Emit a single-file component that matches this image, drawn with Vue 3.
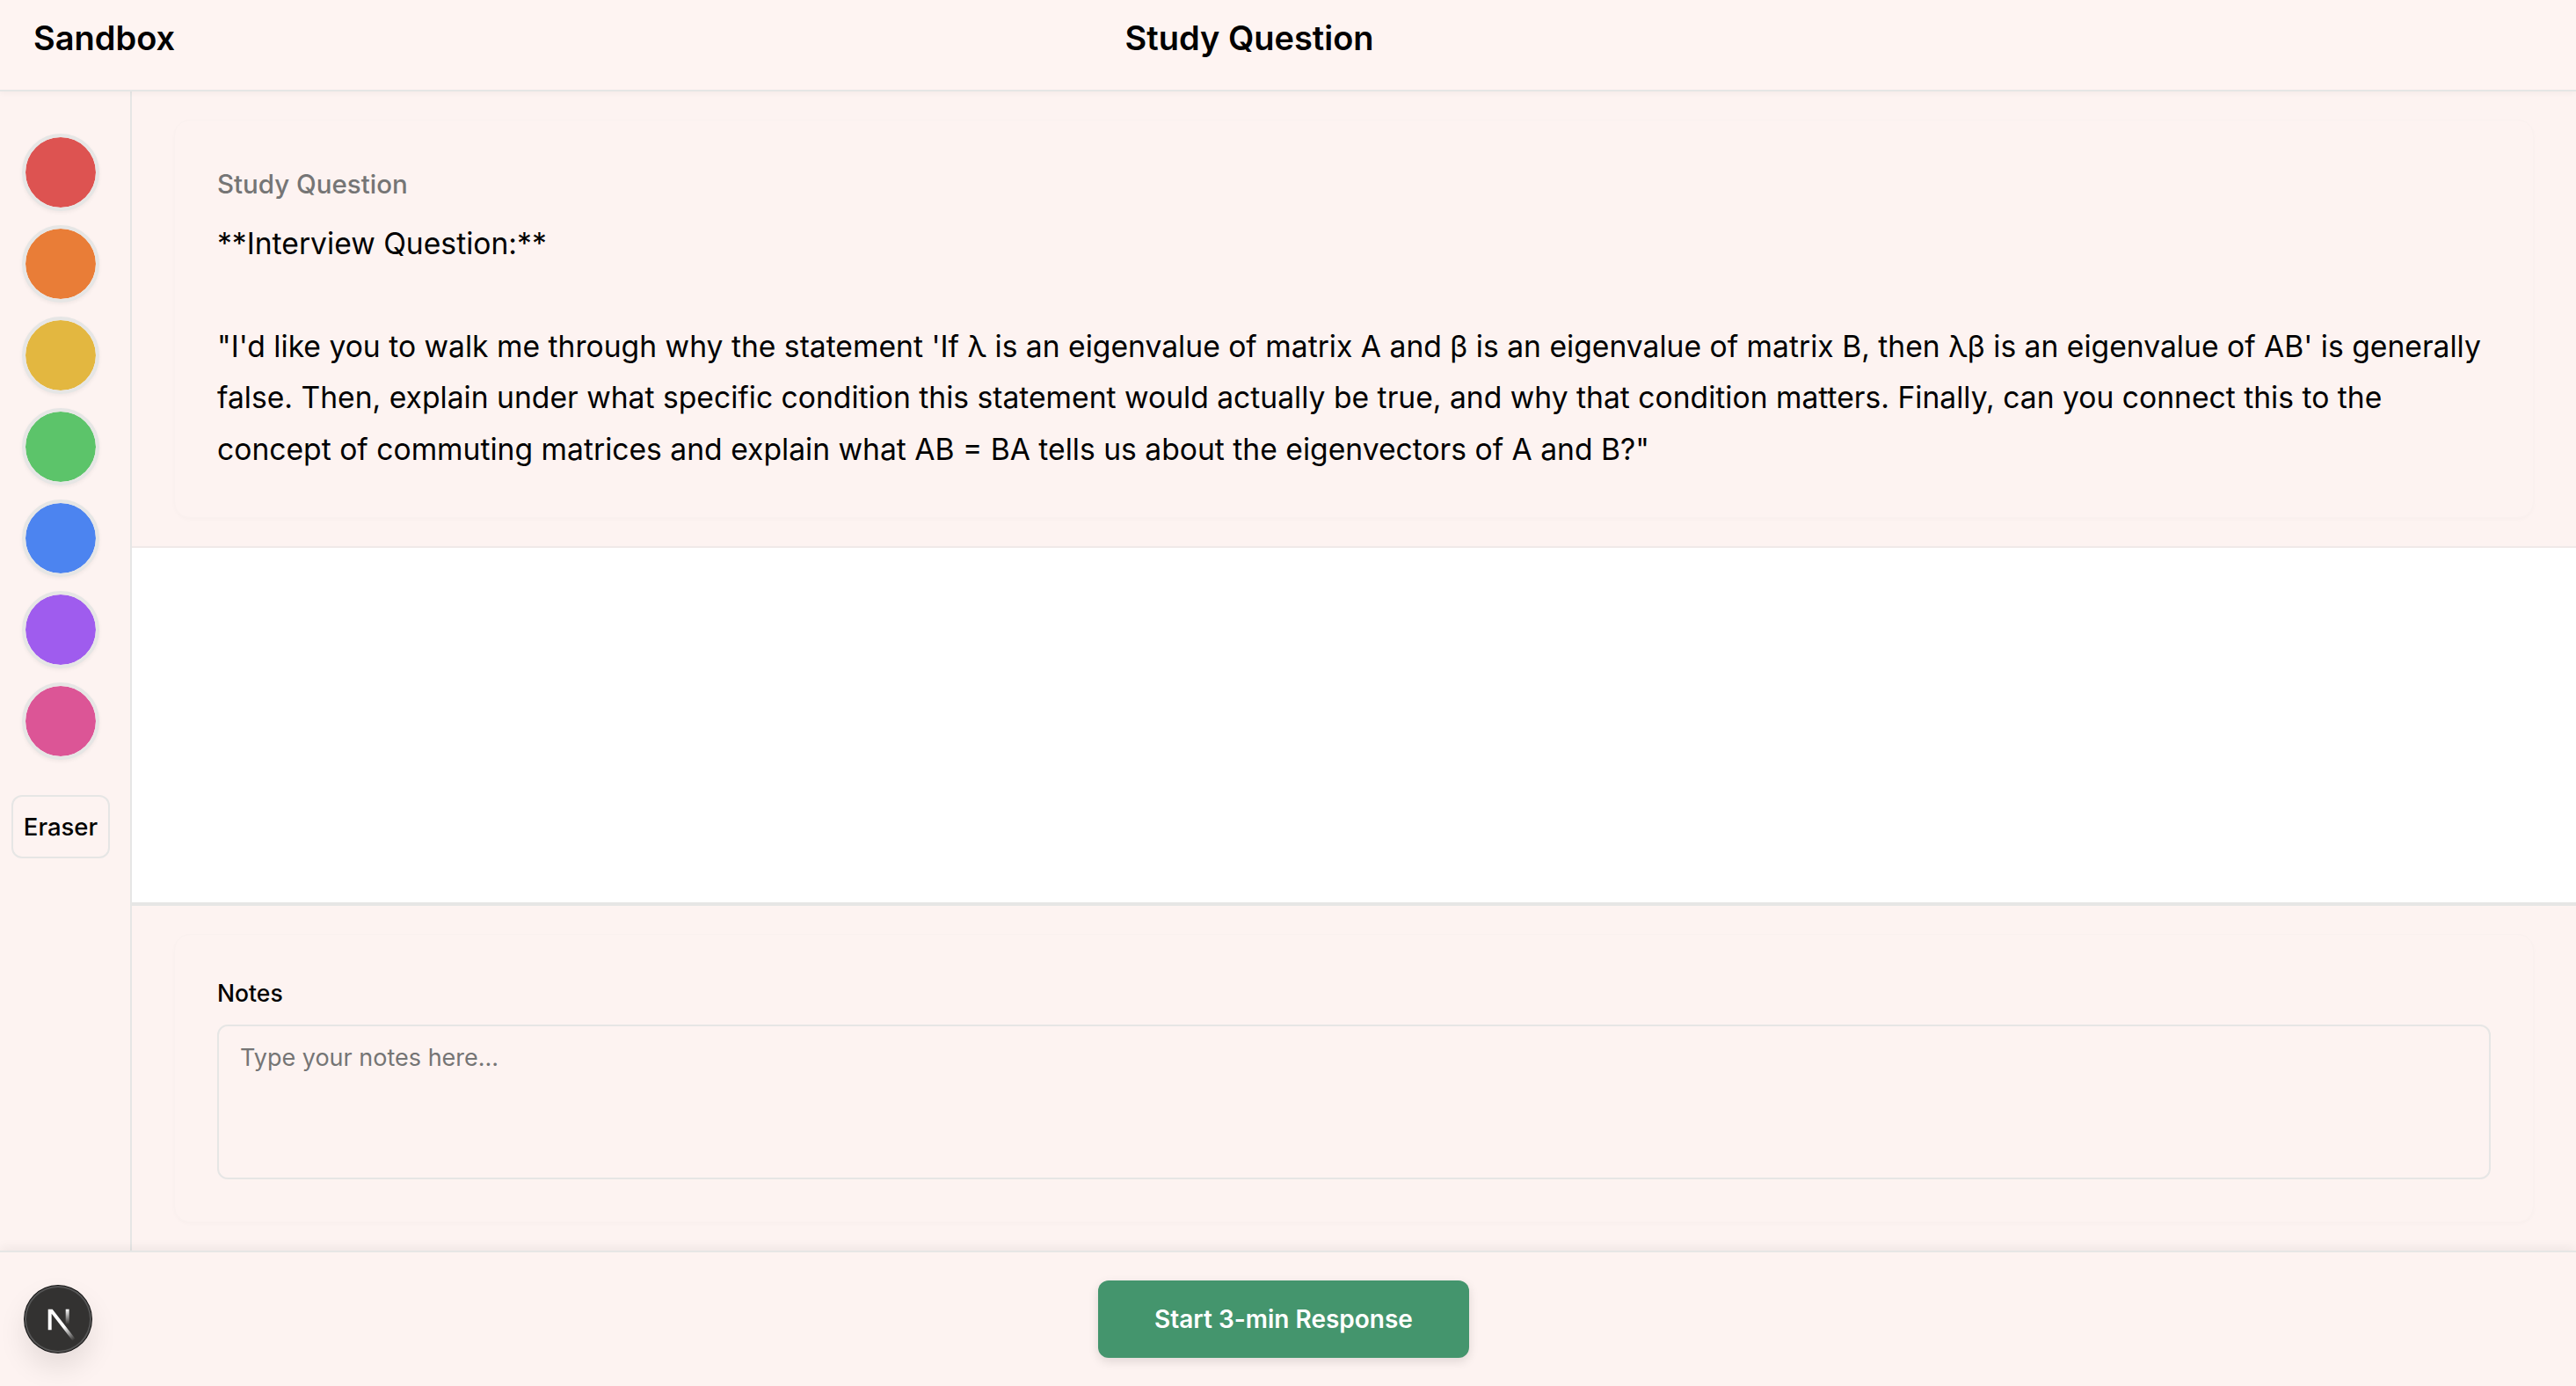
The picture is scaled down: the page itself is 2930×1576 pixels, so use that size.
<script setup>
const swatches = ['#dd5351', '#e97d37', '#e3b740', '#5cc46a', '#4c84f0', '#9f5cee', '#dc5596']
const question = `**Interview Question:**

"I'd like you to walk me through why the statement 'If λ is an eigenvalue of matrix A and β is an eigenvalue of matrix B, then λβ is an eigenvalue of AB' is generally false. Then, explain under what specific condition this statement would actually be true, and why that condition matters. Finally, can you connect this to the concept of commuting matrices and explain what AB = BA tells us about the eigenvectors of A and B?"`
</script>

<template>
  <div class="page">
    <header class="header">
      <h1 class="brand">Sandbox</h1>
      <h2 class="title">Study Question</h2>
      <div class="spacer"></div>
    </header>
    <div class="body">
      <aside class="sidebar">
        <button v-for="c in swatches" :key="c" class="swatch" :style="{ background: c }"></button>
        <button class="eraser">Eraser</button>
      </aside>
      <main class="main">
        <section class="question">
          <div class="card">
            <div class="label">Study Question</div>
            <div class="text">{{ question }}</div>
          </div>
        </section>
        <div class="canvas"></div>
        <section class="notes">
          <div class="card">
            <label class="notes-label">Notes</label>
            <textarea class="area" placeholder="Type your notes here..."></textarea>
          </div>
        </section>
      </main>
    </div>
    <footer class="footer">
      <button class="start">Start 3-min Response</button>
    </footer>
    <div class="badge">
      <svg width="59" height="59" viewBox="0 0 180 180" fill="none">
        <defs>
          <linearGradient id="nd" x1="109" y1="116.5" x2="144.5" y2="160.5" gradientUnits="userSpaceOnUse">
            <stop stop-color="#fff" />
            <stop offset="1" stop-color="#fff" stop-opacity="0" />
          </linearGradient>
          <linearGradient id="nv" x1="121" y1="54" x2="120.8" y2="106.9" gradientUnits="userSpaceOnUse">
            <stop stop-color="#fff" />
            <stop offset="1" stop-color="#fff" stop-opacity="0" />
          </linearGradient>
        </defs>
        <path d="M149.508 157.52L69.142 54H54V125.97H66.1136V69.3836L139.999 164.845C143.333 162.614 146.509 160.165 149.508 157.52Z" fill="url(#nd)" />
        <rect x="115" y="54" width="12" height="72" fill="url(#nv)" />
      </svg>
    </div>
  </div>
</template>

<style>
html, body { margin: 0; background: #fdf3f1; }
</style>

<style scoped>
.page {
  position: relative;
  display: flex;
  flex-direction: column;
  height: 1576px;
  overflow: hidden;
  background: #fdf3f1;
  color: #000;
  font-family: Inter, "Liberation Sans", sans-serif;
}
.header {
  position: relative;
  z-index: 2;
  display: flex;
  align-items: center;
  justify-content: space-between;
  box-sizing: border-box;
  height: 104px;
  padding: 0 38px 16px;
  background: #fef4f2;
  border-bottom: 2px solid #e6e6e5;
  box-shadow: 0 2px 6px rgba(0, 0, 0, 0.04);
}
.brand, .title {
  margin: 0;
  font-size: 38px;
  line-height: 56px;
  font-weight: 600;
}
.spacer { width: 249px; }
.body {
  flex: 1;
  display: flex;
  min-height: 0;
}
.sidebar {
  box-sizing: border-box;
  width: 150px;
  flex: none;
  display: flex;
  flex-direction: column;
  align-items: center;
  gap: 16px;
  padding: 48px 10px 0 0;
  border-right: 2px solid #e6e6e5;
}
.swatch {
  box-sizing: border-box;
  width: 88px;
  height: 88px;
  padding: 0;
  border: 4px solid #e6e6e5;
  border-radius: 50%;
  background-clip: padding-box !important;
  box-shadow: 0 2px 4px rgba(0, 0, 0, 0.05);
}
.eraser {
  box-sizing: border-box;
  width: 112px;
  height: 72px;
  margin-top: 24px;
  padding: 0;
  border: 2px solid #e6e6e5;
  border-radius: 12px;
  background: transparent;
  color: #000;
  font: 500 27.5px Inter, "Liberation Sans", sans-serif;
}
.main {
  flex: 1;
  min-width: 0;
  display: flex;
  flex-direction: column;
}
.question {
  padding: 32px 48px;
  border-bottom: 2px solid #f0e9e8;
}
.notes {
  padding: 32px 48px;
  border-top: 2px solid #e6e6e5;
}
.canvas {
  flex: 1;
  background: #fff;
  border-bottom: 2px solid #e6e6e5;
}
.card {
  padding: 48px;
  border: 1px solid #faf1ef;
  border-radius: 18px;
  box-shadow: 0 2px 4px rgba(0, 0, 0, 0.02);
}
.label {
  font-size: 29.5px;
  line-height: 48px;
  font-weight: 500;
  color: #757575;
  margin-bottom: 15px;
}
.text {
  font-size: 33.65px;
  line-height: 58.4px;
  white-space: pre-wrap;
}
.notes-label {
  display: block;
  font-size: 26.5px;
  line-height: 36px;
  font-weight: 500;
  margin-bottom: 18px;
}
.area {
  display: block;
  box-sizing: border-box;
  width: 100%;
  height: 176px;
  padding: 16px 24px;
  border: 2px solid #e6e6e5;
  border-radius: 12px;
  background: transparent;
  resize: none;
  outline: none;
  font: 27px/40px Inter, "Liberation Sans", sans-serif;
}
.area::placeholder { color: #757575; opacity: 1; }
.footer {
  position: relative;
  z-index: 2;
  box-sizing: border-box;
  height: 154px;
  flex: none;
  display: flex;
  align-items: center;
  justify-content: center;
  padding-right: 10px;
  border-top: 2px solid #e6e6e5;
  background: #fdf3f1;
  box-shadow: 0 -3px 12px rgba(0, 0, 0, 0.06);
}
.start {
  width: 422px;
  height: 88px;
  padding: 0;
  border: 0;
  border-radius: 12px;
  background: #44956d;
  color: #fff;
  font: 600 28px Inter, "Liberation Sans", sans-serif;
  box-shadow: 0 4px 12px rgba(0, 0, 0, 0.12);
}
.badge {
  position: absolute;
  z-index: 3;
  left: 28px;
  top: 1462px;
  width: 76px;
  height: 76px;
  box-sizing: border-box;
  display: flex;
  align-items: center;
  justify-content: center;
  border-radius: 50%;
  background: #333231;
  box-shadow: 0 0 0 1px #111, inset 0 0 0 2px #555, inset 0 0 0 1px #111, 0 16px 32px rgba(0, 0, 0, 0.1);
}
</style>
